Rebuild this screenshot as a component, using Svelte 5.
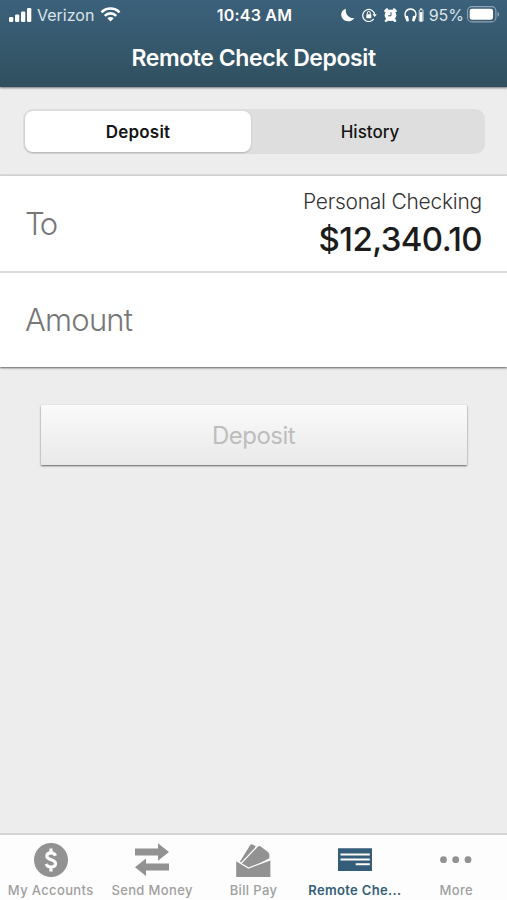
<script lang="ts">
    type TabIcon = "accounts" | "transfer" | "bills" | "check" | "more";

    const tabs: { label: string; icon: TabIcon }[] = [
        { label: "My Accounts", icon: "accounts" },
        { label: "Send Money", icon: "transfer" },
        { label: "Bill Pay", icon: "bills" },
        { label: "Remote Che...", icon: "check" },
        { label: "More", icon: "more" },
    ];

    let activeTab: TabIcon = $state("check");
    let segment = $state("Deposit");
</script>

<div class="screen">
    <header>
        <div class="status">
            <div class="carrier">
                <svg class="signal" width="23" height="14" viewBox="0 0 23 14" fill="currentColor">
                    <rect x="0" y="9" width="4.3" height="5" rx="1.2" />
                    <rect x="6" y="6.5" width="4.3" height="7.5" rx="1.2" />
                    <rect x="12" y="3.5" width="4.3" height="10.5" rx="1.2" />
                    <rect x="18" y="0" width="4.3" height="14" rx="1.2" />
                </svg>
                <span class="network">Verizon</span>
                <svg class="wifi" width="21" height="15" viewBox="0 0 20 15">
                    <g fill="none" stroke="currentColor" stroke-width="2.6">
                        <path d="M1 5.3C6 .2 14 .2 19 5.3" />
                        <path d="M4.3 8.8c3.2-3.3 8.2-3.3 11.4 0" />
                    </g>
                    <path d="M6.8 11.3c1.8-1.7 4.6-1.7 6.4 0L10 14.6z" fill="currentColor" />
                </svg>
            </div>
            <span class="time">10:43 AM</span>
            <div class="indicators">
                <svg class="moon" width="14" height="14" viewBox="0 0 14 14">
                    <path d="M4.8.8C.6 2-.8 6.5 1 9.8c2.5 4.6 9.5 4.8 12.3.2C8.3 10.8 4.200 6.500 4.800.8z" fill="currentColor" />
                </svg>
                <svg class="lock" width="15" height="14" viewBox="0 0 15 14">
                    <path d="M11.7 10.9A6 6 0 1 1 12.7 6.7" fill="none" stroke="currentColor" stroke-width="1.2" />
                    <path d="M10.5 6.3h4.3L12.7 9z" fill="currentColor" />
                    <rect x="4.3" y="6.2" width="5" height="4" rx=".5" fill="currentColor" />
                    <path d="M5.3 6.5V5a1.5 1.5 0 0 1 3 0v1.5" fill="none" stroke="currentColor" />
                </svg>
                <svg class="alarm" width="13" height="14" viewBox="0 0 13 14">
                    <circle cx="6.5" cy="7.3" r="5.8" fill="currentColor" />
                    <path d="M1.5 3 3 1.5M11.5 3 10 1.5M3 12l-1 .8M10 12l1 .8" stroke="currentColor" stroke-width="2.5" stroke-linecap="round" />
                    <path d="M7 4.3v3.5H4.2" fill="none" stroke="#38596f" stroke-width="1" />
                </svg>
                <svg class="headphones" width="20" height="14" viewBox="0 0 20 14">
                    <path d="M2.7 11.5C-1 5.5 2.2 1 6.5 1s7.5 4.5 3.8 10.5" fill="none" stroke="currentColor" stroke-width="1.4" />
                    <rect x="1.7" y="7.8" width="2.8" height="5.7" rx="1" fill="currentColor" transform="rotate(-12 3 10.5)" />
                    <rect x="8.5" y="7.8" width="2.8" height="5.7" rx="1" fill="currentColor" transform="rotate(12 10 10.5)" />
                    <rect x="15.2" y="1.8" width="3.8" height="11.6" rx=".8" fill="none" stroke="currentColor" stroke-width=".8" />
                    <path d="M16 .5h2.2v1H16zM15.8 4h2.6v9h-2.6z" fill="currentColor" />
                </svg>
                <span class="percent">95%</span>
                <svg class="battery" width="33" height="17" viewBox="0 0 33 17">
                    <rect x=".6" y=".6" width="28.3" height="15.3" rx="4.2" fill="none" stroke="#8fa5b3" stroke-width="1.1" />
                    <rect x="2.7" y="2.7" width="23.3" height="11" rx="2.3" fill="currentColor" />
                    <path d="M30.5 5.7c2.1.8 2.1 4.3 0 5.1z" fill="#8fa5b3" />
                </svg>
            </div>
        </div>
        <h1>Remote Check Deposit</h1>
    </header>

    <main>
        <div class="switcher">
            <div class="segments">
                {#each ["Deposit", "History"] as name}
                    <button class:selected={segment === name} onclick={() => (segment = name)}>
                        <span>{name}</span>
                    </button>
                {/each}
            </div>
        </div>

        <section class="form">
            <div class="row">
                <span class="label to">To</span>
                <div class="account">
                    <span class="name">Personal Checking</span>
                    <span class="balance">$12,340.10</span>
                </div>
            </div>
            <div class="row">
                <span class="label">Amount</span>
            </div>
        </section>

        <button class="submit" disabled><span>Deposit</span></button>
    </main>

    <nav>
        {#each tabs as tab}
            <button class="tab" class:active={activeTab === tab.icon} onclick={() => (activeTab = tab.icon)}>
                <svg width="36" height="36" viewBox="0 0 36 36" fill="currentColor">
                    {#if tab.icon === "accounts"}
                        <circle cx="18" cy="18" r="17" />
                        <path
                            d="M22.5 13.8c-.8-2.1-2.4-2.9-4.5-2.9-2.5 0-4.2 1.2-4.2 3.2 0 4.8 8.7 2.5 8.7 7.4 0 2.2-1.8 3.5-4.5 3.5-2.4 0-4.2-1-4.8-3.1M18 6.5v4M18 25.5v4"
                            fill="none"
                            stroke="#fdfdfd"
                            stroke-width="3.2"
                        />
                    {:else if tab.icon === "transfer"}
                        <path d="M1 6.5h23V1.2l11 8.8L24 18.8v-5.3H1z" />
                        <path d="M35 21.5H12v-5L1 25.3 12 34v-5.5h23z" />
                    {:else if tab.icon === "bills"}
                        <g stroke="#fdfdfd" stroke-width="1.2">
                            <path d="M4 20 14.5 3Q16 1 18 2L21.5 4 12 24z" />
                            <path d="M5.5 22 22.5 4.100Q24 2.600 25.700 3.800L33.300 9.500Q35 10.800 35 13v3.500L14 28z" />
                            <path d="M.6 18.200 13.500 26 36 17.500V35.500H.6z" />
                        </g>
                    {:else if tab.icon === "check"}
                        <path d="M1 6.2h34V29H1z" />
                        <path d="M3.5 12.5h29.3M3.5 17.4h29.3M18.7 22.2h14.1" stroke="#fdfdfd" stroke-width="2" />
                    {:else}
                        <circle cx="5.5" cy="17.7" r="3.4" />
                        <circle cx="17.7" cy="17.7" r="3.4" />
                        <circle cx="30" cy="17.7" r="3.4" />
                    {/if}
                </svg>
                <span>{tab.label}</span>
            </button>
        {/each}
    </nav>
</div>

<style>
    :global(body) {
        background: #ededed;
    }

    .screen {
        display: flex;
        flex-direction: column;
        height: 100vh;
        overflow: hidden;
        font-family: Inter, "Liberation Sans", sans-serif;
        background: #ededed;
    }

    button {
        padding: 0;
        border: 0;
        background: none;
        font: inherit;
        color: inherit;
    }

    span,
    h1 {
        white-space: nowrap;
    }

    header {
        flex: none;
        height: 87px;
        color: #fff;
        background: linear-gradient(#3b617b, #30505f);
        box-shadow: 0 1px 2px rgba(0, 0, 0, 0.5);
        z-index: 1;
    }

    .status {
        display: grid;
        grid-template-columns: 1fr auto 1fr;
        align-items: center;
        height: 29px;
        padding: 0 7px 0 9px;
    }

    .carrier,
    .indicators {
        display: flex;
        align-items: center;
    }

    .indicators {
        justify-content: flex-end;
    }

    .network {
        margin: 0 6px 0 5px;
        font-size: 16px;
        color: #dce5eb;
    }

    .time {
        font-size: 16px;
        font-weight: 600;
        letter-spacing: 0.2px;
    }

    .lock,
    .alarm,
    .headphones {
        margin-left: 7px;
    }

    .percent {
        margin: 0 3px 0 5px;
        font-size: 16px;
        color: #dce5eb;
    }

    h1 {
        margin: 14px 0 0;
        font-size: 23px;
        font-weight: 600;
        line-height: 30px;
        letter-spacing: -0.42px;
        text-align: center;
    }

    main {
        flex: 1;
    }

    .switcher {
        height: 89px;
        padding: 22px 22px 0 23px;
        border-bottom: 2px solid #dadada;
        box-sizing: border-box;
    }

    .segments {
        display: grid;
        grid-template-columns: 228px 1fr;
        height: 45px;
        border-radius: 10px;
        background: #dedede;
    }

    .segments button {
        padding-left: 4px;
        border-radius: 8px;
        font-size: 17px;
        font-weight: 500;
        color: #151515;
    }

    .segments .selected {
        margin: 2px 0 2px 2px;
        padding: 0;
        font-weight: 600;
        letter-spacing: 0.2px;
        background: #fff;
        box-shadow: 0 1px 2px rgba(0, 0, 0, 0.2);
    }

    .form {
        background: #fff;
        box-shadow: 0 1px 2px rgba(0, 0, 0, 0.6);
    }

    .row {
        display: flex;
        align-items: center;
        justify-content: space-between;
        height: 94px;
        padding: 0 25px 2px;
        box-sizing: border-box;
    }

    .row:first-child {
        height: 97px;
        padding-bottom: 0;
        border-bottom: 2px solid #dcdcdc;
    }

    .label {
        font-size: 31px;
        font-weight: 300;
        letter-spacing: -0.8px;
        color: #777;
    }

    .to {
        letter-spacing: -2.5px;
    }

    .account {
        display: flex;
        flex-direction: column;
        align-items: flex-end;
    }

    .name {
        font-size: 21px;
        font-weight: 300;
        line-height: 30px;
        letter-spacing: -0.25px;
        color: #333;
    }

    .balance {
        font-size: 33px;
        font-weight: 500;
        line-height: 44px;
        letter-spacing: -0.6px;
        color: #1c1c1c;
    }

    .submit {
        display: block;
        width: 426px;
        height: 60px;
        margin: 38px auto 0;
        border-radius: 1px;
        font-size: 24px;
        letter-spacing: -0.5px;
        color: #bdbdbd;
        background: linear-gradient(#fafafa, #e9e9e9);
        box-shadow: 0 1px 2px rgba(0, 0, 0, 0.6);
    }

    nav {
        display: grid;
        grid-template-columns: repeat(5, 1fr);
        flex: none;
        height: 67px;
        border-top: 2px solid #d3d3d3;
        background: #fdfdfd;
        box-sizing: border-box;
    }

    .tab {
        display: flex;
        flex-direction: column;
        align-items: center;
        padding-top: 7px;
        font-size: 13px;
        font-weight: 500;
        line-height: 20px;
        letter-spacing: 0.35px;
        color: #929292;
    }

    .tab span {
        margin-top: 2px;
        color: #a0a0a0;
    }

    .tab.active,
    .tab.active span {
        color: #345d79;
    }

    .tab.active span {
        font-weight: 600;
    }
</style>
